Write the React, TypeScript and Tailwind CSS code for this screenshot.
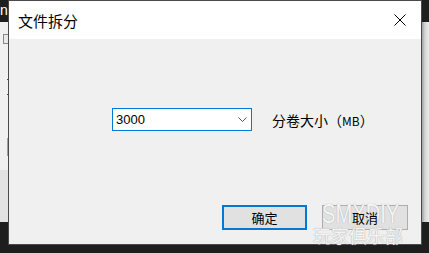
import React from 'react';

const cjk = { fontFamily: '"Noto Sans CJK SC", "Microsoft YaHei", sans-serif' };

function CloseIcon() {
  return (
    <svg width="12" height="12" viewBox="0 0 12 12" className="block">
      <path d="M0.5 0.5 L11.5 11.5 M11.5 0.5 L0.5 11.5" stroke="#000" strokeWidth="1" fill="none" />
    </svg>
  );
}

function Chevron() {
  return (
    <svg width="9" height="5" viewBox="0 0 9 5" className="block">
      <path d="M0.5 0.5 L4.5 4.5 L8.5 0.5" stroke="#555" strokeWidth="1" fill="none" />
    </svg>
  );
}

export default function App() {
  return (
    <div className="relative w-[429px] h-[253px] overflow-hidden bg-[#1e1e1e]">
      {/* desktop behind the dialog */}
      <div className="flex h-full flex-col">
        <div className="h-[22px] bg-[#1f1f1f] text-white text-[14px] leading-[20px]" style={{ fontFamily: '"Liberation Sans", sans-serif' }}>
          n
        </div>
        <div className="flex h-[200px]">
          <div className="w-[8px] flex flex-col">
            <div className="h-[148px] bg-[#f0f0f0] relative">
              <div className="absolute left-[3px] top-[12px] w-[6px] h-[10px] border border-[#888] bg-[#e8e8e8]" />
              <div className="absolute left-[7px] top-[57px] w-[2px] h-[1px] bg-[#444]" />
              <div className="absolute left-[7px] top-[72px] w-[2px] h-[1px] bg-[#3a3a9a]" />
              <div className="absolute left-[7px] top-[116px] w-[2px] h-[18px] bg-[#a0a0a0]" />
            </div>
            <div className="flex-1 bg-[#e2e2e2]" />
          </div>
          <div className="flex-1" />
          <div className="w-[8px] bg-gradient-to-r from-[#8e8e8e] via-[#d6d6d6] to-[#ececec]" />
        </div>
      </div>

      {/* dialog window */}
      <div className="absolute left-[8px] top-0 w-[414px] h-[245px] border border-[#4a4a4a] flex flex-col">
        <div className="h-[38px] bg-white flex items-center justify-between pl-[9px] pr-[15px]">
          <span className="text-[15px] text-black leading-none" style={cjk}>文件拆分</span>
          <CloseIcon />
        </div>
        <div className="flex-1 bg-[#f0f0f0] relative">
          <div className="flex items-center pl-[103px] pt-[69px]">
            <div className="w-[140px] h-[23px] bg-white border border-[#0078d7] flex items-center justify-between pl-[3px] pr-[4px]">
              <span className="text-[13px] text-black leading-none" style={{ fontFamily: '"Liberation Sans", sans-serif' }}>3000</span>
              <Chevron />
            </div>
            <span className="ml-[20px] text-[14px] text-black leading-none" style={cjk}>
              分卷大小（<span className="text-[12px]">MB</span>）
            </span>
          </div>
          <div className="flex gap-[15px] pl-[213px] pt-[74px]">
            <button className="w-[85px] h-[25px] bg-[#e1e1e1] border-2 border-[#0078d7] text-[13px] text-black leading-none" style={cjk}>
              确定
            </button>
            <button className="w-[86px] h-[25px] bg-[#e1e1e1] border border-[#adadad] text-[13px] text-black leading-none" style={cjk}>
              <span className="relative z-10">取消</span>
            </button>
          </div>

          {/* watermark */}
          <span
            className="absolute left-[313px] top-[161px] text-[28px] leading-[28px] text-[#f4f4f4] origin-left scale-x-[0.72] pointer-events-none whitespace-nowrap"
            style={{ fontFamily: '"Liberation Sans", sans-serif', textShadow: '0 0 1px #b4b4b4, 0 0 1px #b4b4b4' }}
          >
            SMXDIY
          </span>
          <span
            className="absolute left-[304px] top-[187px] text-[18px] leading-[18px] text-[#f4f4f4] pointer-events-none whitespace-nowrap"
            style={{ ...cjk, textShadow: '0 0 1px #b4b4b4, 0 0 1px #b4b4b4' }}
          >
            玩家俱乐部
          </span>
        </div>
      </div>
    </div>
  );
}
